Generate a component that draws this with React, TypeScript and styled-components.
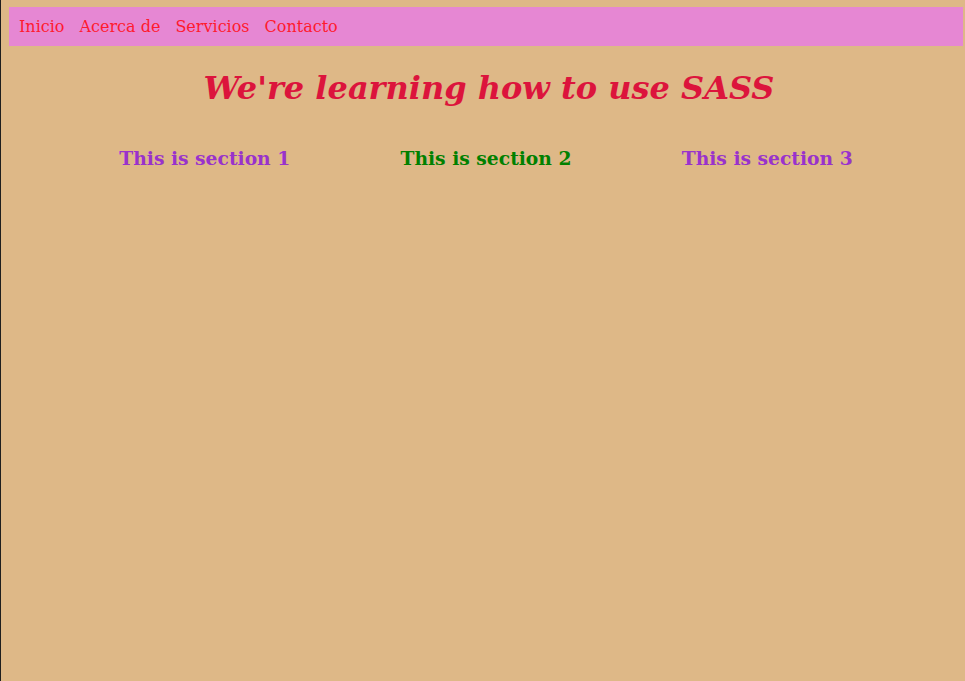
import React from "react";
import styled, { createGlobalStyle } from "styled-components";

const GlobalStyle = createGlobalStyle`
  html, body {
    margin: 0;
    padding: 0;
    background: #deb887;
  }
  body {
    font-family: "DejaVu Serif", serif;
  }
`;

const Page = styled.div`
  min-height: 100vh;
  box-sizing: border-box;
  border-left: 1px solid #1e1e1e;
  padding: 7px 2px 0 8px;
  background: #deb887;
`;

const Nav = styled.nav`
  display: flex;
  gap: 15px;
  padding: 11px 10px 10px;
  background: #e687d3;
  line-height: 18px;
`;

const NavLink = styled.a`
  color: #ff1a2e;
  font-size: 16px;
  text-decoration: none;
`;

const Title = styled.h1`
  margin: 23px 0 22px;
  padding-left: 6px;
  text-align: center;
  font-size: 32px;
  font-style: italic;
  font-weight: bold;
  color: #dc143c;
`;

const Sections = styled.div`
  display: flex;
  justify-content: space-evenly;
`;

const SectionTitle = styled.h3<{ $color: string }>`
  margin: 18px 0;
  font-size: 18.72px;
  font-weight: bold;
  color: ${(p) => p.$color};
`;

export default function App() {
  return (
    <>
      <GlobalStyle />
      <Page>
        <Nav>
          <NavLink href="#">Inicio</NavLink>
          <NavLink href="#">Acerca de</NavLink>
          <NavLink href="#">Servicios</NavLink>
          <NavLink href="#">Contacto</NavLink>
        </Nav>
        <Title>We're learning how to use SASS</Title>
        <Sections>
          <SectionTitle $color="#9932cc">This is section 1</SectionTitle>
          <SectionTitle $color="#008000">This is section 2</SectionTitle>
          <SectionTitle $color="#9932cc">This is section 3</SectionTitle>
        </Sections>
      </Page>
    </>
  );
}
